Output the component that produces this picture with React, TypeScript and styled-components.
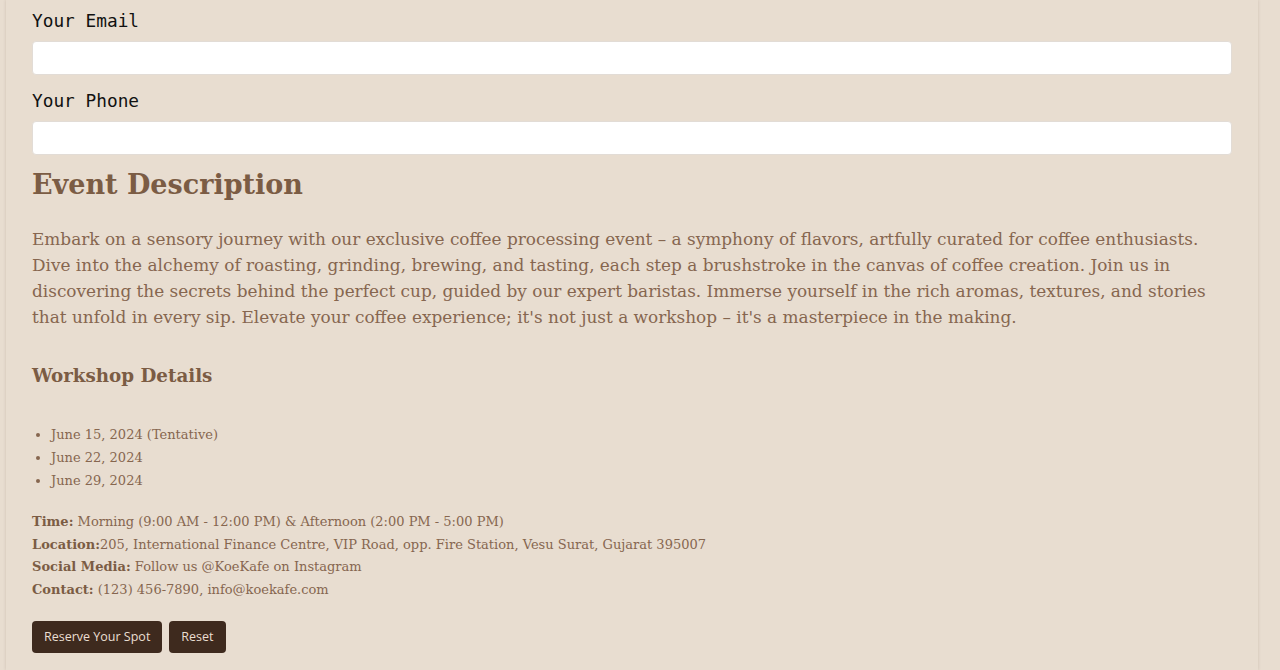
import React from "react";
import styled, { createGlobalStyle } from "styled-components";

const Global = createGlobalStyle`
  html, body { margin: 0; padding: 0; background: #e8ddd0; }
  body { font-family: "DejaVu Serif", Georgia, serif; }
`;

const Page = styled.div`
  padding: 0 22px 0 6px;
  min-height: 670px;
  box-sizing: border-box;
`;

const Card = styled.main`
  background: #e8ddd0;
  box-shadow: 0 0 3px rgba(90, 60, 40, 0.18);
  padding: 9px 26px 16px;
  min-height: 670px;
  box-sizing: border-box;
`;

const Field = styled.div`
  display: flex;
  flex-direction: column;
`;

const Label = styled.label`
  font-family: "DejaVu Sans Mono", "Liberation Mono", monospace;
  font-size: 17.8px;
  line-height: 24px;
  color: #111;
  margin-bottom: 8px;
`;

const Input = styled.input`
  height: 34px;
  box-sizing: border-box;
  border: 1px solid #e2dcd6;
  border-radius: 4px;
  background: #fff;
  margin-bottom: 14px;
`;

const Title = styled.h2`
  font-family: "DejaVu Serif", Georgia, serif;
  font-size: 27px;
  line-height: 36px;
  font-weight: bold;
  color: #7b5c44;
  margin: -2px 0 0;
`;

const Para = styled.p`
  font-size: 16.9px;
  line-height: 26px;
  color: #86664f;
  margin: 23px 0 0;
`;

const Sub = styled.h3`
  font-size: 18.3px;
  line-height: 26px;
  font-weight: bold;
  color: #7b5c44;
  margin: 33px 0 0;
`;

const List = styled.ul`
  margin: 34px 0 0;
  padding-left: 19px;
  font-size: 13px;
  line-height: 23px;
  color: #86664f;
`;

const Info = styled.div`
  margin-top: 19px;
  font-size: 13px;
  line-height: 22.7px;
  color: #86664f;
  b { color: #7b5c44; }
`;

const Actions = styled.div`
  display: flex;
  gap: 7px;
  margin-top: 19px;
`;

const Button = styled.button<{ $pad?: number }>`
  font-family: "Open Sans", "Noto Sans", sans-serif;
  font-size: 12.5px;
  background: #3e2a1e;
  color: #eadfd2;
  border: none;
  border-radius: 4px;
  height: 32px;
  padding: 0 ${(p) => p.$pad ?? 12}px;
  cursor: pointer;
`;

export default function App() {
  return (
    <>
      <Global />
      <Page>
        <Card>
          <Field>
            <Label>Your Email</Label>
            <Input type="email" />
          </Field>
          <Field>
            <Label>Your Phone</Label>
            <Input type="tel" />
          </Field>
          <Title>Event Description</Title>
          <Para>
            Embark on a sensory journey with our exclusive coffee processing event – a symphony of flavors, artfully curated for coffee enthusiasts. Dive into the alchemy of roasting, grinding, brewing, and tasting, each step a brushstroke in the canvas of coffee creation. Join us in discovering the secrets behind the perfect cup, guided by our expert baristas. Immerse yourself in the rich aromas, textures, and stories that unfold in every sip. Elevate your coffee experience; it's not just a workshop – it's a masterpiece in the making.
          </Para>
          <Sub>Workshop Details</Sub>
          <List>
            <li>June 15, 2024 (Tentative)</li>
            <li>June 22, 2024</li>
            <li>June 29, 2024</li>
          </List>
          <Info>
            <div><b>Time:</b> Morning (9:00 AM - 12:00 PM) &amp; Afternoon (2:00 PM - 5:00 PM)</div>
            <div><b>Location:</b>205, International Finance Centre, VIP Road, opp. Fire Station, Vesu Surat, Gujarat 395007</div>
            <div><b>Social Media:</b> Follow us @KoeKafe on Instagram</div>
            <div><b>Contact:</b> (123) 456-7890, info@koekafe.com</div>
          </Info>
          <Actions>
            <Button>Reserve Your Spot</Button>
            <Button>Reset</Button>
          </Actions>
        </Card>
      </Page>
    </>
  );
}
